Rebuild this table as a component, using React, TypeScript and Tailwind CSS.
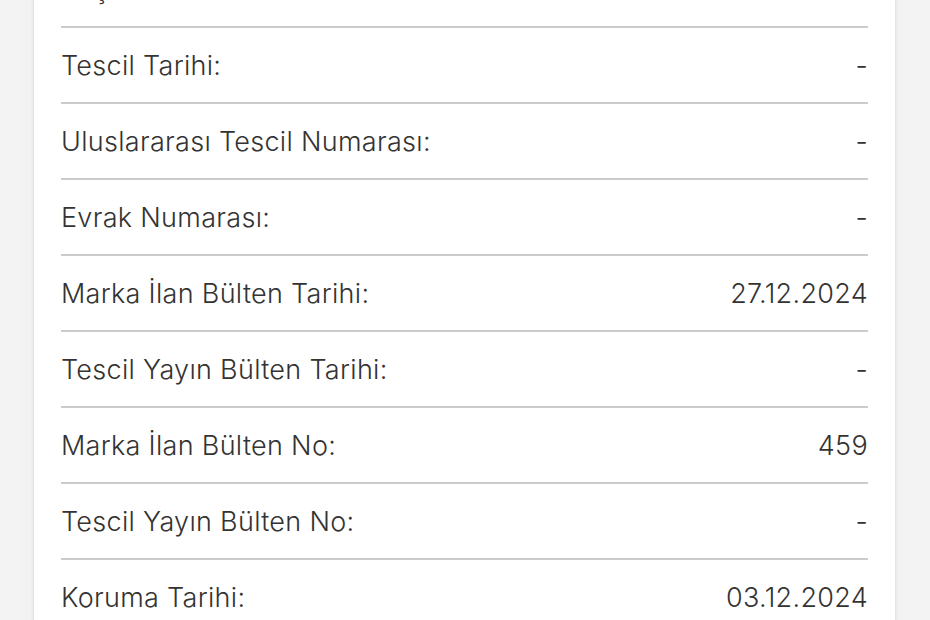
const rows = [
  { label: "Başvuru Tarihi:", value: "03.12.2024" },
  { label: "Tescil Tarihi:", value: "-" },
  { label: "Uluslararası Tescil Numarası:", value: "-" },
  { label: "Evrak Numarası:", value: "-" },
  { label: "Marka İlan Bülten Tarihi:", value: "27.12.2024" },
  { label: "Tescil Yayın Bülten Tarihi:", value: "-" },
  { label: "Marka İlan Bülten No:", value: "459" },
  { label: "Tescil Yayın Bülten No:", value: "-" },
  { label: "Koruma Tarihi:", value: "03.12.2024" },
  { label: "Sınıflar:", value: "35" },
];

export default function App() {
  return (
    <div className="h-[620px] overflow-hidden bg-[#f3f3f3] font-['Inter',sans-serif] text-[#333333]">
      <div className="ml-[34px] w-[861px] -mt-[48px] bg-white px-[27px] shadow-[0_0_4px_rgba(0,0,0,0.14)]">
        {rows.map((r) => (
          <div
            key={r.label}
            className="flex h-[76px] items-center justify-between border-b-2 border-[#cbcbcb] pt-[3px] text-[27px] font-[350] tracking-[0.3px]"
          >
            <span>{r.label}</span>
            <span>{r.value}</span>
          </div>
        ))}
      </div>
    </div>
  );
}
